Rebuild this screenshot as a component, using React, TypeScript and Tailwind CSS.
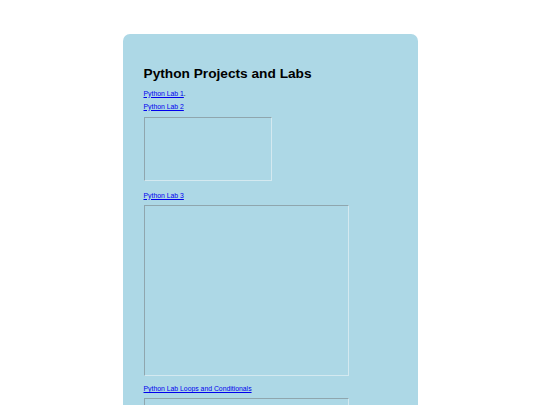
export default function App() {
  const frame =
    "border border-t-[#8fa6ae] border-l-[#8fa6ae] border-r-[#d4e9f0] border-b-[#d4e9f0] bg-[#add8e6]";
  const link = "block w-fit text-[6.85px] leading-[8px] text-[#0000ee] underline";

  return (
    <div className="min-h-screen bg-white pt-[34px] font-['Liberation_Sans',Arial,sans-serif]">
      <div className="mx-auto w-[295px] rounded-t-[7px] bg-[#add8e6] px-[21px] pt-[31.5px] pb-[40px]">
        <h1 className="text-[13.7px] font-bold leading-[16px] text-black">
          Python Projects and Labs
        </h1>

        <p className="mt-[8px] text-[6.85px] leading-[8px] text-black">
          <a href="#" className="text-[#0000ee] underline">
            Python Lab 1
          </a>
          .
        </p>

        <a href="#" className={`${link} mt-[5px]`}>
          Python Lab 2
        </a>
        <div className={`${frame} mt-[6px] h-[64px] w-[128px]`} />

        <a href="#" className={`${link} mt-[11px]`}>
          Python Lab 3
        </a>
        <div className={`${frame} mt-[5px] h-[171px] w-[205px]`} />

        <a href="#" className={`${link} mt-[9.5px]`}>
          Python Lab Loops and Conditionals
        </a>
        <div className={`${frame} mt-[4.8px] h-[171px] w-[205px]`} />
      </div>
    </div>
  );
}
